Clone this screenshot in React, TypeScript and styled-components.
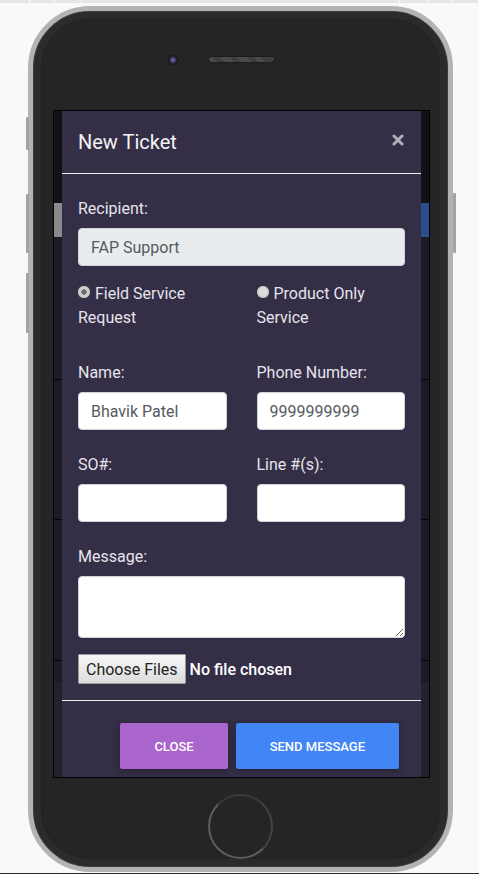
import React from "react";
import styled, { createGlobalStyle } from "styled-components";

const Global = createGlobalStyle`
  html, body { margin: 0; padding: 0; background: #f9f9f9; overflow: hidden; }
  body { font-family: Roboto, "Liberation Sans", Arial, sans-serif; }
  * { box-sizing: border-box; }
`;

const TopStrip = styled.div`
  display: flex;
  height: 3px;
  background: #e6e6e6;
`;

const StripCell = styled.div<{ $w?: number }>`
  flex: ${(p) => (p.$w ? "none" : "1")};
  width: ${(p) => (p.$w ? `${p.$w}px` : "auto")};
  border-right: 1px solid #fbfbfb;
`;

const Phone = styled.div`
  position: relative;
  margin: 3px 0 0 28px;
  width: 425px;
  height: 866px;
  border-radius: 62px;
  border: 5px solid #b3b3b3;
  background: #252525;
  box-shadow: inset 0 0 0 1px #3b3b3b, inset 0 0 0 8px #2b2b2b,
    inset 0 0 0 9px #222;
  display: flex;
  flex-direction: column;
`;

const SideKey = styled.div<{ $side: "left" | "right"; $top: number; $h: number }>`
  position: absolute;
  ${(p) => (p.$side === "left" ? "left: -7px;" : "right: -8px;")}
  top: ${(p) => p.$top}px;
  height: ${(p) => p.$h}px;
  width: 3px;
  border-radius: 1px;
  background: #a3a3a3;
`;

const Sensors = styled.div`
  height: 97px;
  margin-bottom: 2px;
  display: flex;
  align-items: center;
  gap: 29px;
  padding-left: 134px;
  flex: none;
`;

const Camera = styled.div`
  width: 12px;
  height: 12px;
  border-radius: 50%;
  background: radial-gradient(circle, #6a5a9a 0 1.5px, #3e3563 2.5px, #2a2440 3.5px, #1b1b1b 4.5px);
  box-shadow: 0 0 0 1px #2c2c2c;
`;

const Speaker = styled.div`
  width: 67px;
  height: 7px;
  border-radius: 4px;
  border: 1px solid #1c1c1c;
  background: repeating-linear-gradient(45deg, #555 0 1px, #333 1px 2px);
`;

const Screen = styled.div`
  position: relative;
  margin-left: 20px;
  width: 377px;
  height: 668px;
  border: 1px solid #000;
  overflow: hidden;
  display: flex;
  flex-direction: column;
  flex: none;
`;

const AppHeader = styled.div`
  height: 92px;
  background: #131118;
  flex: none;
`;

const NavBand = styled.div`
  height: 34px;
  display: flex;
  flex: none;
`;

const NavSeg = styled.div<{ $c: string }>`
  flex: 1;
  background: ${(p) => p.$c};
`;

const ListRow = styled.div<{ $h: number }>`
  height: ${(p) => p.$h}px;
  background: #1c1a25;
  border-bottom: 1px solid #050407;
  flex: none;
`;

const Filler = styled.div<{ $h?: number; $c: string }>`
  ${(p) => (p.$h ? `height: ${p.$h}px; flex: none;` : "flex: 1;")}
  background: ${(p) => p.$c};
`;

const Modal = styled.div`
  position: absolute;
  top: 0;
  left: 8px;
  width: 359px;
  background: #342e46;
  color: #e9e7ef;
`;

const ModalHeader = styled.div`
  height: 63px;
  padding: 0 17px 0 16px;
  display: flex;
  align-items: center;
  justify-content: space-between;
  border-bottom: 1px solid #eeeeee;
`;

const Title = styled.h5`
  margin: 0;
  font-size: 20px;
  font-weight: 400;
  color: #f3f2f6;
`;

const CloseBtn = styled.button`
  border: 0;
  background: none;
  padding: 0;
  margin-bottom: 4px;
  display: flex;
  color: #b2afbb;
`;

const ModalBody = styled.div`
  padding: 23px 16px 16px;
  display: flex;
  flex-direction: column;
`;

const Group = styled.div<{ $mt?: number }>`
  margin-top: ${(p) => p.$mt ?? 0}px;
  display: flex;
  flex-direction: column;
`;

const Label = styled.label`
  font-size: 16px;
  line-height: 24px;
  margin-bottom: 7px;
  color: #e6e4ec;
`;

const Input = styled.input<{ $disabled?: boolean }>`
  height: 38px;
  width: 100%;
  padding: 6px 12px;
  font-family: Roboto, "Liberation Sans", Arial, sans-serif;
  font-size: 16px;
  color: #555a60;
  background: ${(p) => (p.$disabled ? "#e9ecef" : "#fff")};
  border: 1px solid #ced4da;
  border-radius: 4px;
  outline: none;
`;

const TextArea = styled.textarea`
  height: 62px;
  width: 100%;
  padding: 6px 12px;
  font-family: Roboto, "Liberation Sans", Arial, sans-serif;
  font-size: 16px;
  background: #fff;
  border: 1px solid #ced4da;
  border-radius: 4px;
  outline: none;
`;

const Cols = styled.div<{ $mt?: number }>`
  margin-top: ${(p) => p.$mt ?? 0}px;
  display: grid;
  grid-template-columns: 1fr 1fr;
  column-gap: 30px;
`;

const RadioLabel = styled.label`
  font-size: 16px;
  line-height: 24px;
  color: #e6e4ec;
`;

const RadioDot = styled.span<{ $checked?: boolean }>`
  display: inline-block;
  width: 12px;
  height: 12px;
  border-radius: 50%;
  margin-right: 5px;
  vertical-align: 1px;
  background: ${(p) =>
    p.$checked
      ? "radial-gradient(circle, #6e6e6e 0 2.5px, #d2d2d2 3px)"
      : "#dcdcdc"};
  box-shadow: inset 0 0 0 1px #bdbdbd;
`;

const FileRow = styled.div`
  margin-top: 16px;
  display: flex;
  align-items: center;
`;

const FileButton = styled.button`
  height: 30px;
  padding: 0 7px;
  font-family: Roboto, "Liberation Sans", Arial, sans-serif;
  font-size: 16px;
  color: #222;
  background: linear-gradient(#f7f7f7, #dcdcdc);
  border: 1px solid #9a9a9a;
  border-radius: 1px;
`;

const FileText = styled.span`
  margin-left: 4px;
  font-size: 16px;
  font-weight: 500;
  color: #fff;
`;

const ModalFooter = styled.div`
  border-top: 1px solid #eeeeee;
  padding: 22px 22px 16px;
  display: flex;
  justify-content: flex-end;
  gap: 8px;
`;

const ActionBtn = styled.button<{ $bg: string }>`
  height: 46px;
  padding: 0 34px;
  border: 0;
  border-radius: 2px;
  background: ${(p) => p.$bg};
  color: #fff;
  font-family: Roboto, "Liberation Sans", Arial, sans-serif;
  font-size: 13px;
  font-weight: 500;
  text-transform: uppercase;
  box-shadow: 0 2px 5px rgba(0, 0, 0, 0.16), 0 2px 10px rgba(0, 0, 0, 0.12);
`;

const HomeButton = styled.div`
  margin: 16px auto 0;
  width: 65px;
  height: 65px;
  border-radius: 50%;
  border: 2px solid #5e5e5e;
  border-top-color: #3a3a3a;
  border-right-color: #444;
  flex: none;
`;

const BottomLine = styled.div`
  position: fixed;
  left: 0;
  right: 0;
  bottom: 0;
  height: 1px;
  background: #2a2a2a;
`;

export default function App() {
  return (
    <>
      <Global />
      <TopStrip>
        <StripCell $w={30} />
        <StripCell $w={25} />
        <StripCell $w={27} />
        <StripCell $w={318} />
        <StripCell $w={28} />
        <StripCell $w={25} />
        <StripCell />
      </TopStrip>
      <Phone>
        <SideKey $side="left" $top={106} $h={33} />
        <SideKey $side="left" $top={183} $h={59} />
        <SideKey $side="left" $top={262} $h={60} />
        <SideKey $side="right" $top={182} $h={60} />
        <Sensors>
          <Camera />
          <Speaker />
        </Sensors>
        <Screen>
          <AppHeader />
          <NavBand>
            <NavSeg $c="#8a8a8a" />
            <NavSeg $c="#2b4d8a" />
          </NavBand>
          <ListRow $h={143} />
          <ListRow $h={140} />
          <ListRow $h={141} />
          <Filler $h={21} $c="#1c1a25" />
          <Filler $c="#24212e" />
          <Modal>
            <ModalHeader>
              <Title>New Ticket</Title>
              <CloseBtn aria-label="Close">
                <svg width="12" height="12" viewBox="0 0 12 12">
                  <path
                    d="M2 2 L10 10 M10 2 L2 10"
                    stroke="currentColor"
                    strokeWidth="3"
                    strokeLinecap="round"
                  />
                </svg>
              </CloseBtn>
            </ModalHeader>
            <ModalBody>
              <Group>
                <Label>Recipient:</Label>
                <Input $disabled readOnly defaultValue="FAP Support" />
              </Group>
              <Cols $mt={16}>
                <RadioLabel>
                  <RadioDot $checked />
                  Field Service
                  <br />
                  Request
                </RadioLabel>
                <RadioLabel>
                  <RadioDot />
                  Product Only
                  <br />
                  Service
                </RadioLabel>
              </Cols>
              <Cols $mt={31}>
                <Group>
                  <Label>Name:</Label>
                  <Input readOnly defaultValue="Bhavik Patel" />
                </Group>
                <Group>
                  <Label>Phone Number:</Label>
                  <Input readOnly defaultValue="9999999999" />
                </Group>
              </Cols>
              <Cols $mt={23}>
                <Group>
                  <Label>SO#:</Label>
                  <Input readOnly defaultValue="" />
                </Group>
                <Group>
                  <Label>Line #(s):</Label>
                  <Input readOnly defaultValue="" />
                </Group>
              </Cols>
              <Group $mt={23}>
                <Label>Message:</Label>
                <TextArea readOnly defaultValue="" />
              </Group>
              <FileRow>
                <FileButton>Choose Files</FileButton>
                <FileText>No file chosen</FileText>
              </FileRow>
            </ModalBody>
            <ModalFooter>
              <ActionBtn $bg="#aa66cc">Close</ActionBtn>
              <ActionBtn $bg="#4285f4">Send Message</ActionBtn>
            </ModalFooter>
          </Modal>
        </Screen>
        <HomeButton />
      </Phone>
      <BottomLine />
    </>
  );
}
